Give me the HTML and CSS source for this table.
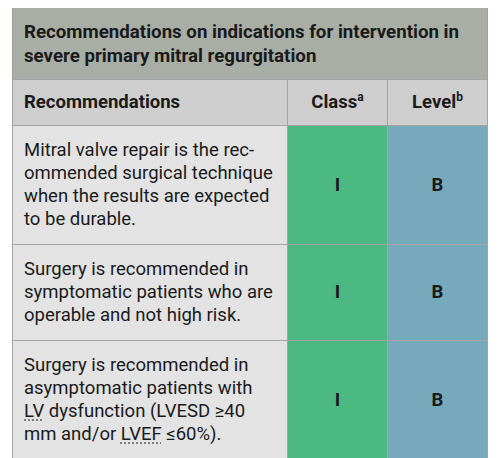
FILE: index.html
```html
<!DOCTYPE html>
<html lang="en">

<head>
    <meta charset="UTF-8">
    <meta name="viewport" content="width=device-width, initial-scale=1.0">
    <title>Recommendations on indications for intervention</title>
    <link rel="stylesheet" href="styles.css">
</head>

<body>
    <!-- 推荐表 -->
    <table class="rec">
        <caption class="title">Recommendations on indications for intervention in severe primary mitral regurgitation</caption>
        <thead>
            <tr>
                <th class="col-text">Recommendations</th>
                <th class="col-mark">Class<sup>a</sup></th>
                <th class="col-mark">Level<sup>b</sup></th>
            </tr>
        </thead>
        <tbody>
            <tr>
                <td class="text">Mitral valve repair is the rec-<br>ommended surgical technique when the results are expected to be durable.</td>
                <td class="cls">I</td>
                <td class="lvl">B</td>
            </tr>
            <tr>
                <td class="text">Surgery is recommended in symptomatic patients who are operable and not high risk.</td>
                <td class="cls">I</td>
                <td class="lvl">B</td>
            </tr>
            <tr>
                <td class="text">Surgery is recommended in asymptomatic patients with<br><abbr>LV</abbr> dysfunction (LVESD ≥40<br>mm and/or <abbr>LVEF</abbr> ≤60%).</td>
                <td class="cls">I</td>
                <td class="lvl">B</td>
            </tr>
        </tbody>
    </table>
</body>

</html>
```

FILE: styles.css
```css
body {
    margin: 0;
    padding: 8px 13px 0 12px;
    background: #fff;
    font-family: Roboto, "Liberation Sans", sans-serif;
    color: #1a1a1a;
}

.rec {
    width: 475px;
    border-collapse: collapse;
    table-layout: fixed;
}

.rec .title {
    background: #a8aea5;
    text-align: left;
    font-size: 18.7px;
    font-weight: bold;
    line-height: 24px;
    padding: 12px 11px 11px;
    border-left: 1px solid #9da09b;
    border-right: 1px solid #9da09b;
}

.rec th,
.rec td {
    border: 1px solid #a3a3a3;
    vertical-align: middle;
}

.rec th {
    background: #cecece;
    font-size: 18.5px;
    font-weight: bold;
    line-height: 23px;
    padding: 11px;
}

.rec th.col-text {
    width: 252px;
    text-align: left;
}

.rec th.col-mark {
    width: 77px;
    text-align: center;
}

.rec sup {
    font-size: 12px;
    line-height: 0;
    vertical-align: 7px;
}

.rec td {
    font-size: 18.5px;
    line-height: 23px;
}

.rec td.text {
    background: #e3e3e4;
    padding: 13px 5px 13px 11px;
}

.rec td.cls,
.rec td.lvl {
    text-align: center;
    font-weight: bold;
    font-size: 18.5px;
}

.rec td.cls {
    background: #4cb882;
}

.rec td.lvl {
    background: #76a9bb;
}

.rec abbr {
    text-decoration: underline dotted #777;
    text-underline-offset: 3px;
}
```
